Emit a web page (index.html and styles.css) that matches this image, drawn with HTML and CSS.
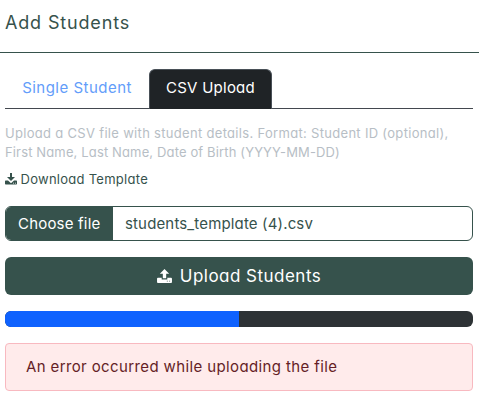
FILE: index.html
```html
<!DOCTYPE html>
<html lang="en">
<head>
<meta charset="utf-8">
<title>Add Students</title>
<link rel="stylesheet" href="styles.css">
</head>
<body>
<header class="modal-header"><h1 class="title"><span>Add Students</span></h1></header>
<main class="modal-body">
  <nav class="tabs">
    <a class="tab tab-single"><span>Single Student</span></a>
    <a class="tab tab-csv active"><span>CSV Upload</span></a>
  </nav>
  <p class="hint"><span class="hint-first">Upload a CSV file with student details. Format: Student ID (optional),</span><br><span class="hint-second">First Name, Last Name, Date of Birth (YYYY-MM-DD)</span></p>
  <a class="download">
    <svg class="icon-download" viewBox="0 0 12 12"><path fill-rule="evenodd" d="M5 0h2v4h3L6 8 2 4h3zM.7 7.500h2.300L6 10.200l3-2.700h2.300q.7 0 .7.7v2.600q0 .7-.7.7H.7q-.7 0-.7-.7V8.200q0-.7.7-.7zM8 9.800h1v.8H8zm2 0h1v.8h-1z"/></svg>
    <span>Download Template</span>
  </a>
  <div class="file-input">
    <span class="choose"><span>Choose file</span></span>
    <span class="filename">students_template (4).csv</span>
  </div>
  <button class="upload">
    <svg class="icon-upload" viewBox="0 0 16 15"><path fill-rule="evenodd" d="M6.200 10V5H3L8 0l5 5H9.800v5zM1 9.500h4v1.700h6V9.500h4q1 0 1 1V14q0 1-1 1H1q-1 0-1-1v-3.500q0-1 1-1zM10.500 12.700h1v.7h-1zm2.500 0h1v.7h-1z"/></svg>
    <span>Upload Students</span>
  </button>
  <div class="progress"><div class="bar"></div></div>
  <div class="alert"><span>An error occurred while uploading the file</span></div>
</main>
</body>
</html>
```
FILE: styles.css
```css
* { box-sizing: border-box; }
body {
  margin: 0;
  background: #fff;
  color: #36524c;
  font-family: Inter, "Liberation Sans", sans-serif;
  font-feature-settings: "cv11", "calt" 0;
  font-size: 15px;
  white-space: nowrap;
}
.modal-header {
  height: 53px;
  padding: 0 5px 7px;
  border-bottom: 1px solid #36524c;
  display: flex;
  align-items: center;
}
.title { margin: 0; font-size: 18px; font-weight: 400; letter-spacing: 0.84px; }
.modal-body { padding: 16px 6px 0 5px; }
.tabs { display: flex; height: 40px; border-bottom: 1px solid #43484f; }
.tab { height: 39px; padding-bottom: 3px; display: flex; align-items: center; justify-content: center; }
.tab-single { width: 144px; color: #639dfa; letter-spacing: 0.48px; }
.tab-csv {
  width: 123px;
  height: 40px;
  padding-bottom: 4px;
  border: 1px solid #495057;
  border-bottom: 0;
  border-radius: 6px 6px 0 0;
  background: #1f2326;
  color: #fff;
  letter-spacing: 0.25px;
}
.hint { margin: 15px 0 0; font-size: 13px; line-height: 19px; color: #b7bec5; }
.hint-first { letter-spacing: 0.31px; }
.hint-second { letter-spacing: 0.14px; }
.download {
  display: flex;
  align-items: center;
  height: 20px;
  margin-top: 7px;
  font-size: 13px;
  letter-spacing: 0.27px;
  gap: 3.5px;
}
.icon-download { width: 12px; height: 12px; fill: #36524c; }
.file-input {
  display: flex;
  height: 35px;
  margin-top: 17px;
  border: 1px solid #36524c;
  border-radius: 6px;
  overflow: hidden;
  align-items: center;
}
.choose {
  width: 107px;
  height: 100%;
  padding-left: 12px;
  display: flex;
  align-items: center;
  background: #36524c;
  color: #fff;
  letter-spacing: 0.2px;
}
.filename { margin-left: 12px; letter-spacing: 0.15px; }
.upload {
  width: 100%;
  height: 38px;
  margin: 16px 0;
  padding: 0 0 1px;
  border: 0;
  border-radius: 6px;
  background: #36524c;
  color: #fff;
  font: inherit;
  font-feature-settings: inherit;
  font-size: 17px;
  letter-spacing: 0.48px;
  display: flex;
  align-items: center;
  justify-content: center;
  gap: 8px;
}
.icon-upload { width: 15px; height: 14px; fill: #fff; }
.progress { height: 16px; border-radius: 6px; background: #2d3235; overflow: hidden; }
.bar { width: 50%; height: 100%; background: #0f62fe; }
.alert {
  height: 48px;
  margin-top: 16px;
  padding: 0 20px 2px;
  display: flex;
  align-items: center;
  border: 1px solid #f8b9c0;
  border-radius: 4px;
  background: #ffebeb;
  color: #651e26;
  letter-spacing: 0.38px;
}
```
